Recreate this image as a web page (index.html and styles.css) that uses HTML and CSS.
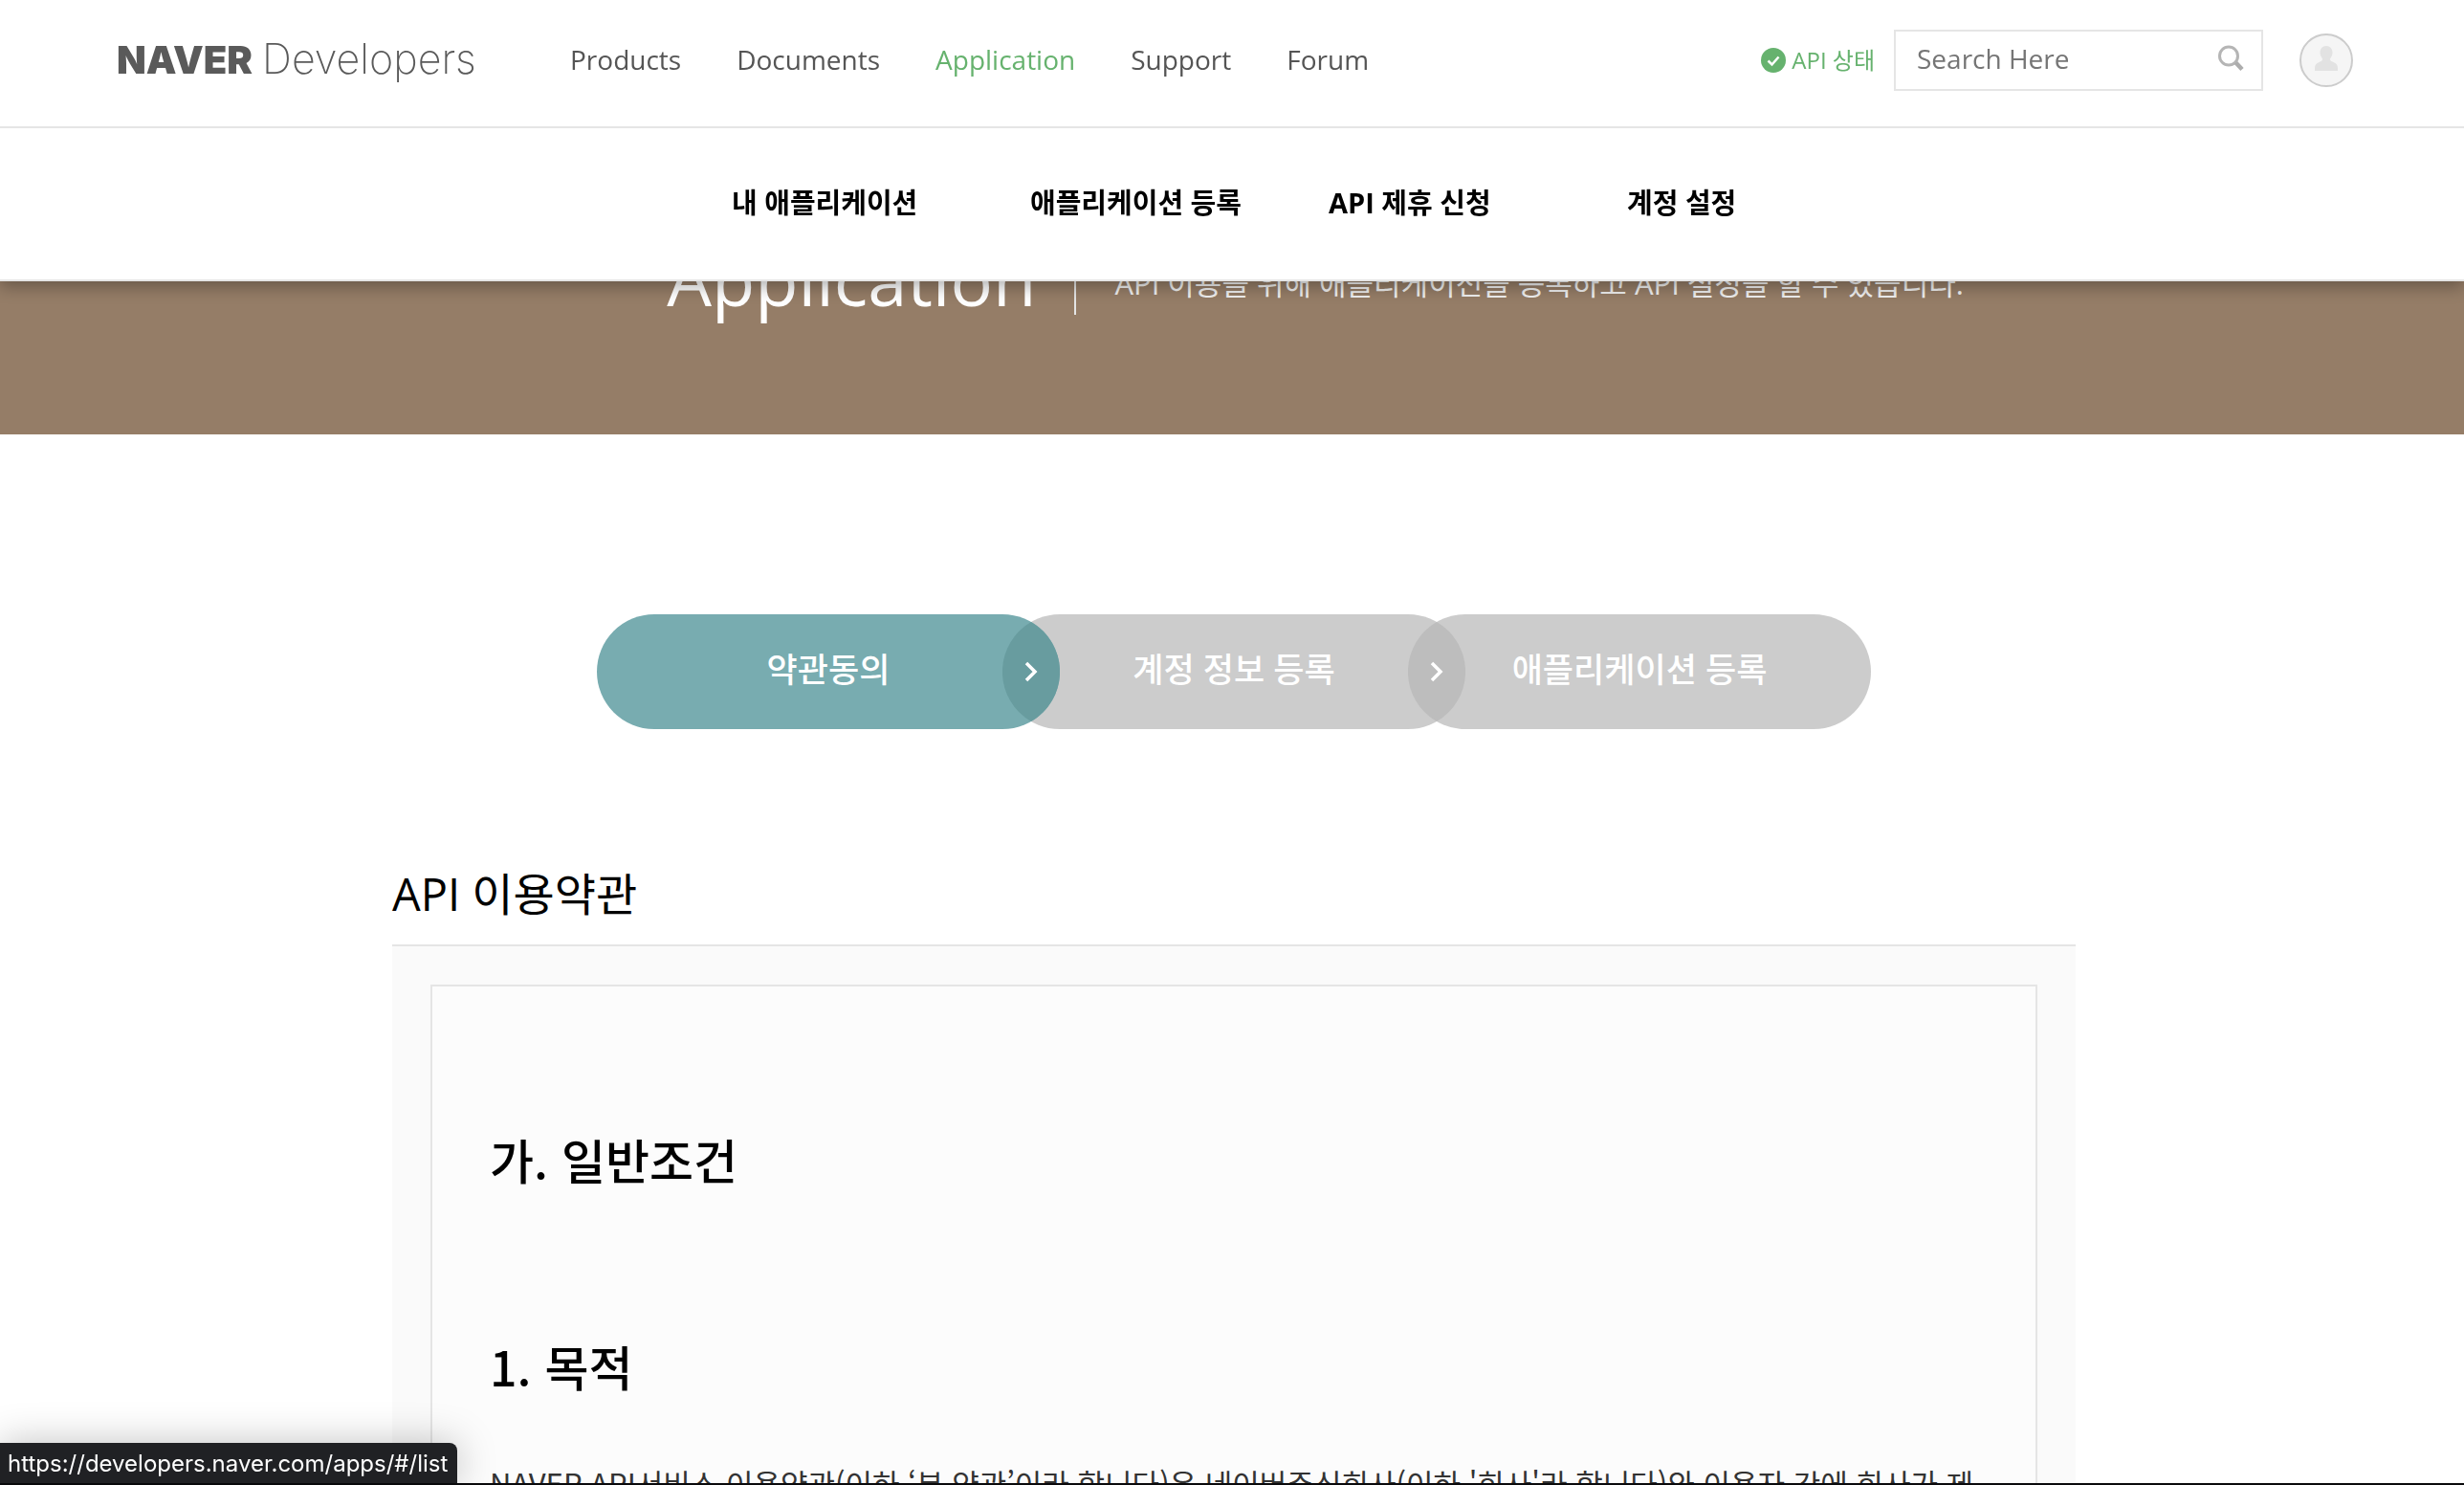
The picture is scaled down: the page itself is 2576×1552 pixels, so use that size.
FILE: index.html
```html
<!DOCTYPE html>
<html lang="ko">
<head>
<meta charset="utf-8">
<title>NAVER Developers - Application</title>
<link rel="stylesheet" href="styles.css">
</head>
<body>
<header class="header">
  <div class="topbar">
    <a class="logo" href="#"><span class="logo-brand">NAVER</span><span class="logo-sub">Developers</span></a>
    <nav class="nav">
      <a href="#">Products</a>
      <a href="#">Documents</a>
      <a class="active" href="#">Application</a>
      <a href="#">Support</a>
      <a href="#">Forum</a>
    </nav>
    <div class="tools">
      <a class="status" href="#">
        <svg width="26" height="26" viewBox="0 0 26 26" aria-hidden="true"><circle cx="13" cy="13" r="13" fill="#66b26e"/><path d="M7.500 13.500l4 4 7-8" fill="none" stroke="#fff" stroke-width="2.500"/></svg>
        <span>API 상태</span>
      </a>
      <form class="search">
        <input type="search" placeholder="Search Here" aria-label="Search Here">
        <button type="button" aria-label="Search">
          <svg width="28" height="28" viewBox="0 0 28 28"><circle cx="12" cy="11.500" r="9.500" fill="none" stroke="#b5b5b5" stroke-width="3"/><path d="M19.500 18.500l6.500 7" stroke="#adadad" stroke-width="4.500"/></svg>
        </button>
      </form>
      <button class="avatar" type="button" aria-label="Account">
        <svg width="24" height="26" viewBox="0 0 24 26"><path d="M12 0c4 0 6.500 3 6.500 7 0 3-1.500 5-2.500 6.500 0 2 1 2.500 3.500 3.500 3 1.200 4.500 3 4.500 6v3H0v-3c0-3 1.500-4.800 4.500-6 2.500-1 3.500-1.500 3.500-3.500C7 12 5.500 10 5.500 7c0-4 2.500-7 6.500-7z" fill="#e2e2e2"/></svg>
      </button>
    </div>
  </div>
  <nav class="submenu">
    <a href="#">내 애플리케이션</a>
    <a href="#">애플리케이션 등록</a>
    <a href="#">API 제휴 신청</a>
    <a href="#">계정 설정</a>
  </nav>
</header>

<section class="hero">
  <h1>Application</h1>
  <p>API 이용을 위해 애플리케이션을 등록하고 API 설정을 할 수 있습니다.</p>
</section>

<main class="content">
  <ol class="steps">
    <li class="step current">약관동의
      <svg class="lens" width="60" height="120" viewBox="0 0 60 120" aria-hidden="true"><path d="M30 8A60 60 0 0 1 30 112A60 60 0 0 1 30 8z" fill="#689c9f"/><path d="M25 51l9 9-9 9" fill="none" stroke="#fff" stroke-width="3.500"/></svg>
    </li>
    <li class="step">계정 정보 등록
      <svg class="lens" width="60" height="120" viewBox="0 0 60 120" aria-hidden="true"><path d="M30 8A60 60 0 0 1 30 112A60 60 0 0 1 30 8z" fill="#bdbdbd"/><path d="M25 51l9 9-9 9" fill="none" stroke="#fff" stroke-width="3.500"/></svg>
    </li>
    <li class="step">애플리케이션 등록</li>
  </ol>

  <section class="terms">
    <h2>API 이용약관</h2>
    <div class="terms-panel">
      <article class="terms-box">
        <h3>가. 일반조건</h3>
        <h3>1. 목적</h3>
        <p>NAVER API서비스 이용약관(이하 ‘본 약관’이라 합니다)은 네이버주식회사(이하 '회사'라 합니다)와 이용자 간에 회사가 제</p>
      </article>
    </div>
  </section>
</main>
<div class="linkbar">https://developers.naver.com/apps/#/list</div>
</body>
</html>
```
FILE: styles.css
```css
* {
  box-sizing: border-box;
}

body {
  display: flex;
  flex-direction: column;
  margin: 0;
  height: 100vh;
  overflow: hidden;
  background: #fff;
  border-bottom: 2px solid #0a0a0c;
  color: #000;
  font-family: "Open Sans", "Noto Sans CJK KR", sans-serif;
}

a {
  color: inherit;
  text-decoration: none;
}

.header {
  position: fixed;
  top: 0;
  left: 0;
  right: 0;
  z-index: 10;
  background: #fff;
  border-bottom: 2px solid #e5e5e5;
  box-shadow: 0 6px 16px rgba(0, 0, 0, 0.3);
}

.topbar {
  display: flex;
  align-items: center;
  height: 134px;
  padding: 0 116px 6px 122px;
  border-bottom: 2px solid #e5e5e5;
}

.logo {
  display: flex;
  align-items: baseline;
  gap: 10px;
  width: 474px;
  padding-bottom: 4px;
  color: #5a5a5a;
  font-family: Inter, sans-serif;
}

.logo-brand {
  font-size: 40px;
  font-weight: 900;
}

.logo-sub {
  font-size: 43px;
  font-weight: 200;
}

.nav {
  display: flex;
  gap: 58px;
  padding-bottom: 2px;
  color: #555;
  font-size: 28px;
}

.nav .active {
  color: #66b26e;
}

.tools {
  display: flex;
  align-items: center;
  margin-left: auto;
}

.status {
  display: flex;
  align-items: center;
  gap: 6px;
  margin-right: 20px;
  color: #66b26e;
  font-size: 24px;
  line-height: 32px;
}

.search {
  display: flex;
  align-items: center;
  width: 386px;
  height: 64px;
  margin-right: 38px;
  padding: 0 18px 4px 22px;
  border: 2px solid #e5e5e5;
}

.search input {
  flex: 1;
  min-width: 0;
  padding: 0;
  border: 0;
  outline: 0;
  background: none;
  font: inherit;
  font-size: 28px;
}

.search input::placeholder {
  color: #757575;
}

.search button {
  display: flex;
  padding: 0;
  border: 0;
  background: none;
}

.avatar {
  display: flex;
  align-items: center;
  justify-content: center;
  width: 56px;
  height: 56px;
  padding: 0 0 4px;
  border: 2px solid #ccc;
  border-radius: 50%;
  background: #f5f5f5;
}

.submenu {
  display: grid;
  grid-template-columns: repeat(4, 312px);
  justify-content: center;
  align-items: center;
  height: 158px;
  padding: 0 0 6px 202px;
  font-size: 29px;
  font-weight: 700;
}

.hero {
  display: flex;
  flex: none;
  align-items: center;
  justify-content: center;
  height: 320px;
  margin-top: 134px;
  padding-left: 174px;
  background: #957d67;
  color: #fff;
}

.hero h1 {
  margin: 0;
  padding: 0 40px 4px 0;
  border-right: 2px solid #e5e5e5;
  font-size: 74px;
  font-weight: 400;
  line-height: 66px;
}

.hero p {
  margin: 0;
  padding-left: 40px;
  color: #f0f0f0;
  font-size: 31px;
  font-weight: 400;
}

.content {
  flex: 1;
  min-height: 0;
  overflow: hidden;
  width: 100%;
  max-width: 1764px;
  margin: 0 auto;
  padding: 188px 0 0 4px;
}

.steps {
  display: flex;
  justify-content: center;
  margin: 0;
  padding: 0;
  list-style: none;
}

.step {
  position: relative;
  width: 484px;
  height: 120px;
  border-radius: 60px;
  background: #ccc;
  color: #fff;
  font-size: 35px;
  font-weight: 500;
  line-height: 116px;
  text-align: center;
}

.step + .step {
  margin-left: -60px;
}

.step.current {
  z-index: 1;
  background: #78acb0;
}

.step:nth-child(2) .lens {
  z-index: 1;
}

.lens {
  position: absolute;
  top: 0;
  right: 0;
}

.terms {
  margin-top: 138px;
}

.terms h2 {
  margin: 0;
  font-size: 47px;
  font-weight: 400;
  line-height: 68px;
}

.terms-panel {
  margin-top: 19px;
  padding: 40px;
  border-top: 2px solid #e5e5e5;
  background: #fafafa;
}

.terms-box {
  padding: 144px 60px;
  border: 2px solid #e5e5e5;
  background: #fcfcfc;
  font-family: "Noto Sans CJK KR", sans-serif;
}

.terms-box h3 {
  margin: 0;
  font-size: 50px;
  font-weight: 500;
  line-height: 72px;
}

.terms-box h3 + h3 {
  margin-top: 144px;
}

.terms-box p {
  margin: 60px 0 0;
  color: #333;
  font-size: 31px;
  line-height: 54px;
}

.linkbar {
  position: fixed;
  left: 0;
  bottom: 2px;
  z-index: 20;
  height: 42px;
  padding: 0 10px 0 8px;
  border-top-right-radius: 8px;
  background: #202124;
  box-shadow: 0 0 40px rgba(0, 0, 0, 0.25);
  color: #fff;
  font-family: Inter, sans-serif;
  font-size: 24px;
  line-height: 44px;
}
```
